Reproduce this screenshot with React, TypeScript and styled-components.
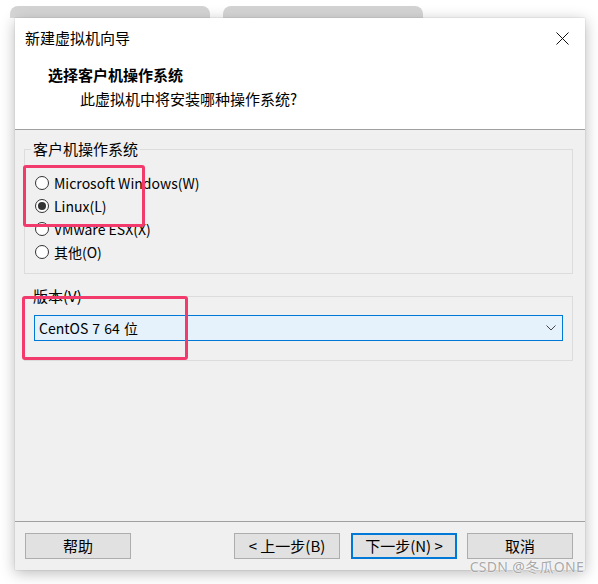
import React from 'react';
import styled, { createGlobalStyle } from 'styled-components';

const GlobalStyle = createGlobalStyle`
  html, body {
    margin: 0;
    padding: 0;
    background: #ffffff;
  }
  body {
    font-family: 'Noto Sans CJK SC', 'Noto Sans', 'Liberation Sans', sans-serif;
    font-size: 15px;
    color: #000;
  }
`;

const Page = styled.div`
  width: 598px;
  height: 584px;
  overflow: hidden;
  background: #fff;
`;

const TabStrip = styled.div`
  display: flex;
  gap: 13px;
  padding: 6px 0 0 10px;
`;

const Tab = styled.div`
  width: 200px;
  height: 12px;
  border-radius: 8px 8px 0 0;
  background: linear-gradient(#d2d2d2, #dadada);
`;

const Dialog = styled.div`
  position: relative;
  margin-left: 15px;
  width: 570px;
  height: 552px;
  display: flex;
  flex-direction: column;
  background: #f0f0f0;
  box-shadow: 0 3px 14px rgba(0, 0, 0, 0.28), 0 0 1px rgba(0, 0, 0, 0.25);
`;

const TitleBar = styled.div`
  height: 40px;
  display: flex;
  align-items: center;
  justify-content: space-between;
  padding: 0 16px 0 10px;
  background: #fff;
`;

const Title = styled.span`
  line-height: 20px;
`;

const CloseButton = styled.div`
  width: 14px;
  height: 14px;
  display: flex;
  align-items: center;
  justify-content: center;
`;

const Header = styled.div`
  box-sizing: border-box;
  height: 72px;
  padding-top: 7px;
  background: #fff;
  border-bottom: 1px solid #a0a0a0;
`;

const Heading = styled.div`
  font-weight: bold;
  line-height: 20px;
  padding-left: 33px;
`;

const SubHeading = styled.div`
  line-height: 20px;
  margin-top: 4px;
  padding-left: 65px;
`;

const Body = styled.div`
  flex: 1;
  padding: 9px 12px 0 9px;
  display: flex;
  flex-direction: column;
  gap: 12px;
`;

const GroupBox = styled.fieldset<{ $padTop: number; $padBottom: number }>`
  margin: 0;
  border: 1px solid #dcdcdc;
  padding: ${(p) => p.$padTop}px 9px ${(p) => p.$padBottom}px 9px;
  min-width: 0;
`;

const Legend = styled.legend`
  line-height: 20px;
  padding: 0 2px;
  margin-left: -3px;
`;

const RadioRow = styled.label`
  display: flex;
  align-items: center;
  height: 23px;
  gap: 5px;
  padding-left: 1px;
  font-size: 14px;
  white-space: nowrap;
`;

const RadioCircle = styled.span<{ $checked?: boolean }>`
  box-sizing: border-box;
  width: 14px;
  height: 14px;
  border-radius: 50%;
  border: 1px solid #333;
  background: #fff;
  display: flex;
  align-items: center;
  justify-content: center;

  &::after {
    content: '';
    width: 8px;
    height: 8px;
    border-radius: 50%;
    background: ${(p) => (p.$checked ? '#333' : 'transparent')};
  }
`;

const Select = styled.div`
  box-sizing: border-box;
  height: 26px;
  display: flex;
  align-items: center;
  justify-content: space-between;
  padding: 0 6px 0 4px;
  font-size: 14px;
  word-spacing: 1px;
  background: #e5f1fb;
  border: 1px solid #0078d7;
`;

const Footer = styled.div`
  height: 49px;
  box-sizing: border-box;
  border-top: 1px solid #a0a0a0;
  display: flex;
  align-items: flex-start;
  padding: 11px 12px 0 10px;
`;

const ButtonGroup = styled.div`
  margin-left: auto;
  display: flex;
  gap: 11px;

  & > :last-child {
    margin-left: -1px;
  }
`;

const Button = styled.div<{ $default?: boolean }>`
  box-sizing: border-box;
  width: 106px;
  height: 26px;
  display: flex;
  align-items: center;
  justify-content: center;
  background: #e1e1e1;
  border: ${(p) => (p.$default ? '2px solid #0078d7' : '1px solid #adadad')};
  line-height: 20px;
`;

const Highlight = styled.div<{ $left: number; $top: number; $w: number; $h: number }>`
  position: absolute;
  left: ${(p) => p.$left}px;
  top: ${(p) => p.$top}px;
  width: ${(p) => p.$w}px;
  height: ${(p) => p.$h}px;
  box-sizing: border-box;
  border: 3px solid #f23a6c;
  border-radius: 3px;
  pointer-events: none;
`;

const Watermark = styled.div`
  position: absolute;
  right: 1px;
  bottom: -6px;
  font-family: 'Noto Sans', 'Noto Sans CJK SC', sans-serif;
  font-size: 14px;
  line-height: 18px;
  letter-spacing: 0.3px;
  color: #a8a8a8;
  text-shadow: 0 0 1px #fff, 0 0 2px #fff;
`;

const osOptions = [
  { label: 'Microsoft Windows(W)', checked: false },
  { label: 'Linux(L)', checked: true },
  { label: 'VMware ESX(X)', checked: false },
  { label: '其他(O)', checked: false },
];

export default function App() {
  return (
    <Page>
      <GlobalStyle />
      <TabStrip>
        <Tab />
        <Tab />
      </TabStrip>
      <Dialog>
        <TitleBar>
          <Title>新建虚拟机向导</Title>
          <CloseButton>
            <svg width="13" height="13" viewBox="0 0 13 13">
              <path d="M0.5 0.5 L12.5 12.5 M12.5 0.5 L0.5 12.5" stroke="#111" strokeWidth="1" />
            </svg>
          </CloseButton>
        </TitleBar>
        <Header>
          <Heading>选择客户机操作系统</Heading>
          <SubHeading>此虚拟机中将安装哪种操作系统?</SubHeading>
        </Header>
        <Body>
          <GroupBox $padTop={12} $padBottom={10}>
            <Legend>客户机操作系统</Legend>
            {osOptions.map((o) => (
              <RadioRow key={o.label}>
                <RadioCircle $checked={o.checked} />
                {o.label}
              </RadioRow>
            ))}
          </GroupBox>
          <GroupBox $padTop={9} $padBottom={19}>
            <Legend>版本(V)</Legend>
            <Select>
              <span>CentOS 7 64 位</span>
              <svg width="10" height="6" viewBox="0 0 10 6">
                <path d="M0.5 0.5 L5 5 L9.5 0.5" fill="none" stroke="#444" strokeWidth="1" />
              </svg>
            </Select>
          </GroupBox>
        </Body>
        <Footer>
          <Button>帮助</Button>
          <ButtonGroup>
            <Button>&lt; 上一步(B)</Button>
            <Button $default>下一步(N) &gt;</Button>
            <Button>取消</Button>
          </ButtonGroup>
        </Footer>
        <Highlight $left={8} $top={147} $w={122} $h={62} />
        <Highlight $left={7} $top={278} $w={166} $h={64} />
        <Watermark>CSDN @冬瓜ONE</Watermark>
      </Dialog>
    </Page>
  );
}
